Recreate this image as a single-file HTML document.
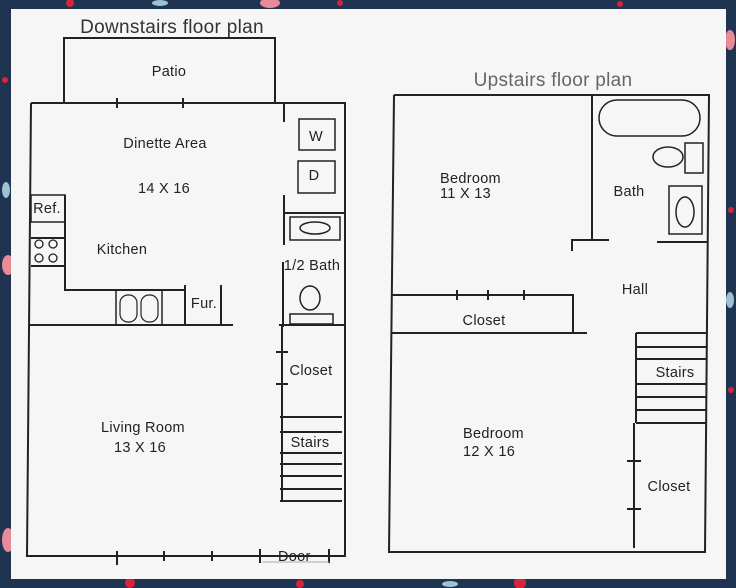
<!DOCTYPE html>
<html><head><style>
html,body{margin:0;padding:0}
body{width:736px;height:588px;overflow:hidden;background:#1f3450;position:relative}
svg{position:absolute;left:0;top:0}
text{font-family:"Liberation Sans",sans-serif;font-size:14.5px;fill:#222;letter-spacing:0.3px}
</style></head><body>
<svg width="736" height="588" viewBox="0 0 736 588">
<g fill="#d9233a">
<circle cx="70" cy="3" r="4"/><circle cx="130" cy="583" r="5"/><circle cx="300" cy="584" r="4"/><circle cx="520" cy="583" r="6"/><circle cx="5" cy="80" r="3"/><circle cx="731" cy="210" r="3"/><circle cx="731" cy="390" r="3"/><circle cx="340" cy="3" r="3"/><circle cx="620" cy="4" r="3"/>
</g>
<g fill="#e98a98"><ellipse cx="8" cy="265" rx="6" ry="10"/><ellipse cx="8" cy="540" rx="6" ry="12"/><ellipse cx="270" cy="3" rx="10" ry="5"/><ellipse cx="730" cy="40" rx="5" ry="10"/></g>
<g fill="#9cc3cf"><ellipse cx="6" cy="190" rx="4" ry="8"/><ellipse cx="730" cy="300" rx="4" ry="8"/><ellipse cx="450" cy="584" rx="8" ry="3"/><ellipse cx="160" cy="3" rx="8" ry="3"/></g>
<rect x="11" y="9" width="715" height="570" fill="#f6f6f6"/>
<g stroke="#222" stroke-width="2" fill="none">
<path d="M64 102V38H275V102"/>
<path d="M31 103H346M31 103L27 556H340M345 103V556H340"/>
<path d="M117 98v10M183 98v10M117 551v14M164 551v10M212 551v10M260 549v14M329 549v14"/>
<path d="M284 103v19M284 195v50M284 213H345M283 262v65M279 325H345"/>
<rect x="290" y="217" width="50" height="23" stroke-width="1.5"/>
<ellipse cx="315" cy="228" rx="15" ry="6" stroke-width="1.5"/>
<ellipse cx="310" cy="298" rx="10" ry="12" stroke-width="1.5"/>
<rect x="290" y="314" width="43" height="10" stroke-width="1.5"/>
<rect x="299" y="119" width="36" height="31" stroke-width="1.5"/>
<rect x="298" y="161" width="37" height="32" stroke-width="1.5"/>
<rect x="31" y="195" width="34" height="27" stroke-width="1.5"/>
<path d="M31 238H65M31 266H64M65 195V290H185"/>
<circle cx="39" cy="244" r="4" stroke-width="1.3"/><circle cx="53" cy="244" r="4" stroke-width="1.3"/>
<circle cx="39" cy="258" r="4" stroke-width="1.3"/><circle cx="53" cy="258" r="4" stroke-width="1.3"/>
<rect x="116" y="290" width="46" height="35" stroke-width="1.5"/>
<rect x="120" y="295" width="17" height="27" rx="8" stroke-width="1.2"/>
<rect x="141" y="295" width="17" height="27" rx="8" stroke-width="1.2"/>
<path d="M185 285v40M221 285v40M30 325H233"/>
<path d="M282 325V501M276 352h12M276 384h12"/>
<path d="M280 417H342M280 432H342M280 453H342M280 464H342M280 476H342M280 489H342M280 501H342"/>
<path d="M262 562H329" stroke="#aaa" stroke-width="1"/>
<path d="M394 95H709L705 552H389L394 95"/>
<path d="M592 95V240M572 251V240H609M657 242H707"/>
<rect x="599" y="100" width="101" height="36" rx="18" stroke-width="1.5"/>
<ellipse cx="668" cy="157" rx="15" ry="10" stroke-width="1.5"/>
<rect x="685" y="143" width="18" height="30" stroke-width="1.5"/>
<rect x="669" y="186" width="33" height="48" stroke-width="1.5"/>
<ellipse cx="685" cy="212" rx="9" ry="15" stroke-width="1.5"/>
<path d="M392 295H573V333M392 333H587M457 290v10M488 290v10M524 290v10"/>
<path d="M636 333V423M636 333H706M636 347H706M636 359H706M636 384H706M636 397H706M636 410H706M636 423H706"/>
<path d="M634 423V548M627 461h14M627 509h14"/>
</g>
<text x="172" y="33" text-anchor="middle" style="font-size:19px;fill:#333">Downstairs floor plan</text>
<text x="553" y="86" text-anchor="middle" style="font-size:19px;fill:#666">Upstairs floor plan</text>
<text x="169" y="76" text-anchor="middle">Patio</text>
<text x="165" y="148" text-anchor="middle">Dinette Area</text>
<text x="164" y="193" text-anchor="middle">14 X 16</text>
<text x="47" y="213" text-anchor="middle">Ref.</text>
<text x="122" y="254" text-anchor="middle">Kitchen</text>
<text x="312" y="270" text-anchor="middle">1/2 Bath</text>
<text x="204" y="308" text-anchor="middle">Fur.</text>
<text x="316" y="141" text-anchor="middle">W</text>
<text x="314" y="180" text-anchor="middle">D</text>
<text x="143" y="432" text-anchor="middle">Living Room</text>
<text x="140" y="452" text-anchor="middle">13 X 16</text>
<text x="311" y="375" text-anchor="middle">Closet</text>
<text x="310" y="447" text-anchor="middle">Stairs</text>
<text x="278" y="561">Door</text>
<text x="440" y="183">Bedroom</text>
<text x="440" y="198">11 X 13</text>
<text x="629" y="196" text-anchor="middle">Bath</text>
<text x="635" y="294" text-anchor="middle">Hall</text>
<text x="484" y="325" text-anchor="middle">Closet</text>
<text x="675" y="377" text-anchor="middle">Stairs</text>
<text x="669" y="491" text-anchor="middle">Closet</text>
<text x="463" y="438">Bedroom</text>
<text x="463" y="456">12 X 16</text>
</svg>
</body></html>
